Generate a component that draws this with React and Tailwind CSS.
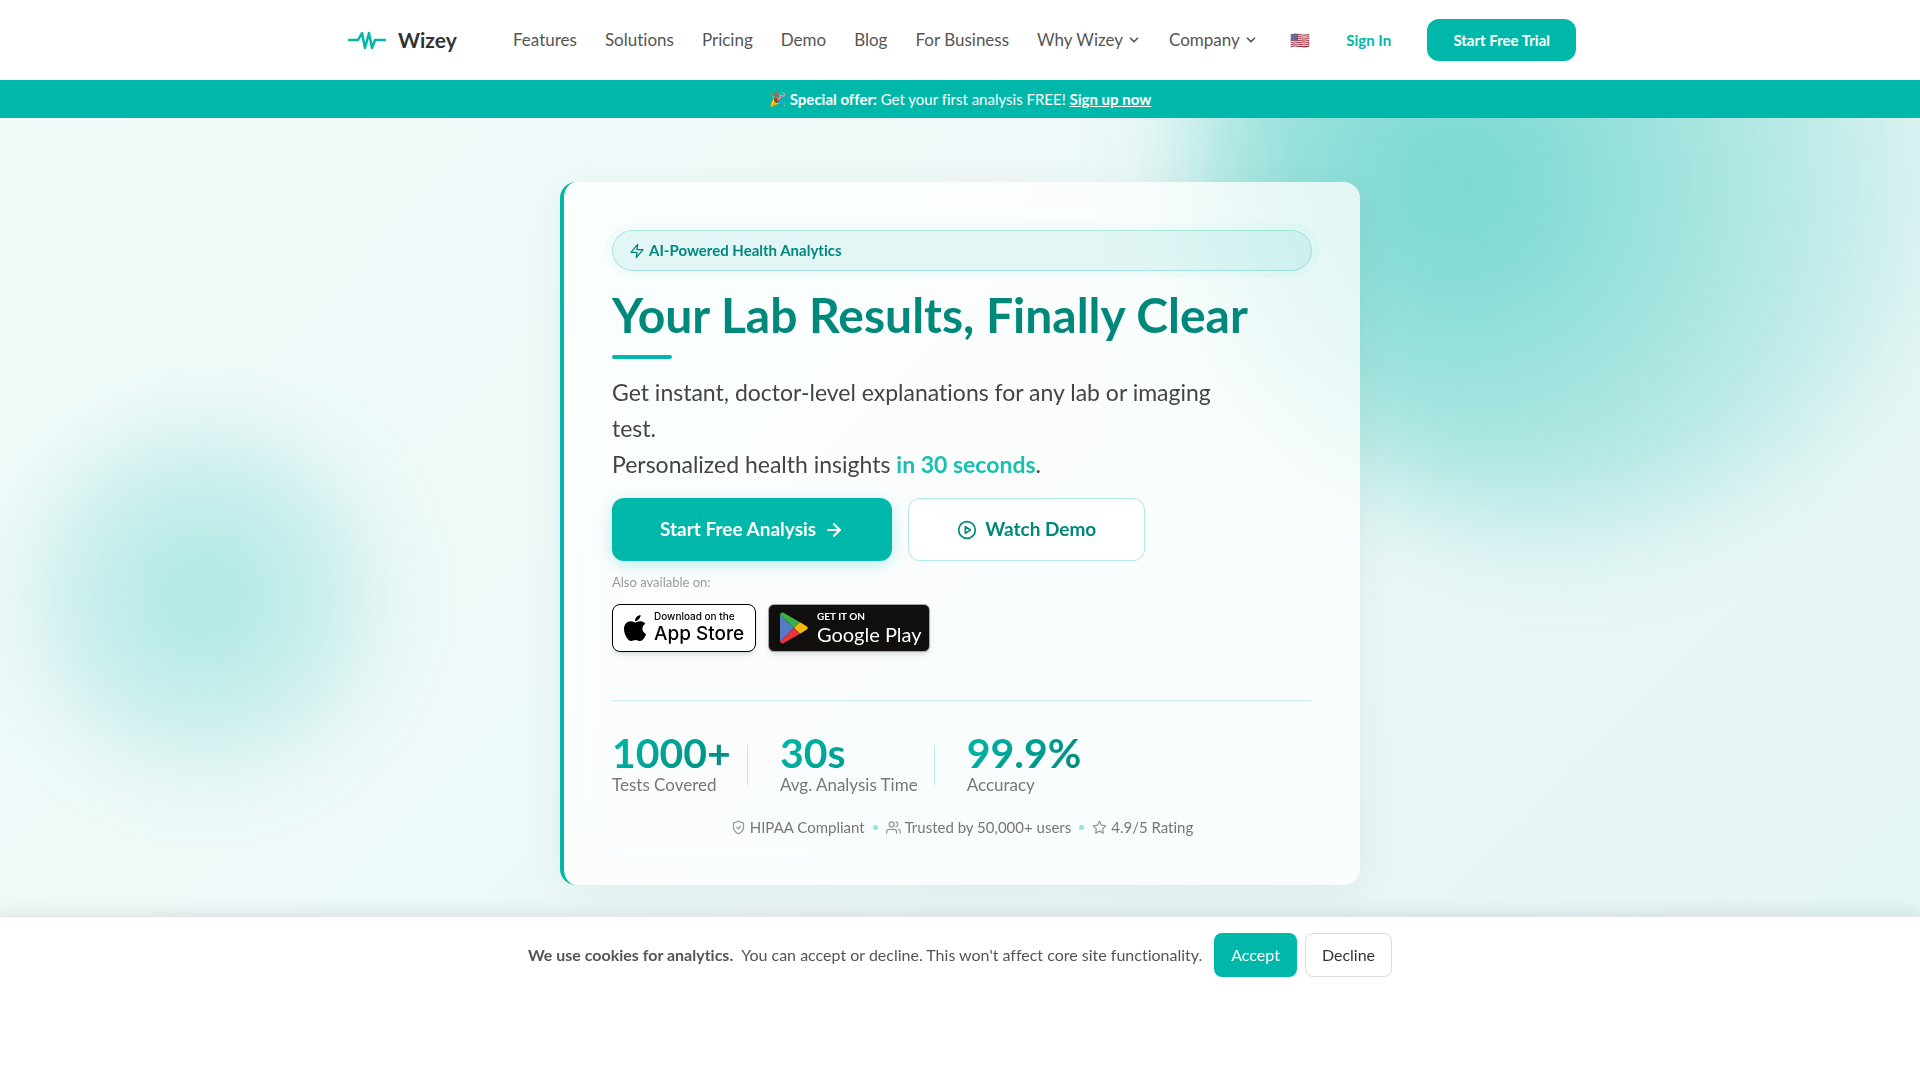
import { FaApple } from 'react-icons/fa';
import { FiArrowRight, FiChevronDown, FiPlayCircle, FiStar, FiUsers, FiZap } from 'react-icons/fi';

const navLinks = [
  { label: 'Features' },
  { label: 'Solutions' },
  { label: 'Pricing' },
  { label: 'Demo' },
  { label: 'Blog' },
  { label: 'For Business' },
  { label: 'Why Wizey', menu: true },
  { label: 'Company', menu: true },
];

const stats = [
  { value: '1000+', label: 'Tests Covered' },
  { value: '30s', label: 'Avg. Analysis Time' },
  { value: '99.9%', label: 'Accuracy' },
];

function ShieldCheck({ className }) {
  return (
    <svg viewBox="0 0 24 24" fill="none" stroke="currentColor" strokeWidth="2" strokeLinecap="round" strokeLinejoin="round" className={className} aria-hidden="true">
      <path d="M12 22s8-4 8-10V5l-8-3-8 3v7c0 6 8 10 8 10z" />
      <path d="M9.500 12l2 2 3.500-4" />
    </svg>
  );
}

function Logo() {
  return (
    <a href="#home" className="flex items-center gap-3 pl-1">
      <svg viewBox="0 0 38 18" fill="none" stroke="#00b8a9" strokeWidth="2.500" strokeLinecap="round" strokeLinejoin="round" className="h-[18px] w-[38px]" aria-hidden="true">
        <path d="M1 9h9l4-7 3 15 4-15 3 15 3-8h10" />
      </svg>
      <span className="text-[21px] font-bold text-[#333]">Wizey</span>
    </a>
  );
}

function Header() {
  return (
    <header className="bg-white">
      <div className="mx-auto flex h-20 max-w-7xl items-center justify-between px-6">
        <Logo />
        <nav className="flex items-center gap-7 pl-6 text-[17px] leading-5 text-[#555]">
          {navLinks.map((item) =>
            item.menu ? (
              <button key={item.label} type="button" className="flex items-center gap-1">
                {item.label}
                <FiChevronDown className="size-[14px]" strokeWidth={3} />
              </button>
            ) : (
              <a key={item.label} href="#nav">{item.label}</a>
            )
          )}
        </nav>
        <button type="button" aria-label="Language" className="text-base">🇺🇸</button>
        <a href="#signin" className="px-1 text-[15px] font-bold text-[#00b8a9]">Sign In</a>
        <a href="#trial" className="flex h-[42px] items-center rounded-xl bg-[#00b8a9] px-[26px] text-[15px] font-bold text-white">Start Free Trial</a>
      </div>
    </header>
  );
}

function Banner() {
  return (
    <div className="flex h-[38px] items-center justify-center gap-1 bg-[#00b8a9] text-[15px] text-white">
      <span className="text-sm">🎉</span>
      <p>
        <strong className="font-bold">Special offer:</strong> Get your first analysis FREE! <a href="#signup" className="font-bold underline">Sign up now</a>
      </p>
    </div>
  );
}

function StoreBadges() {
  return (
    <div className="mt-3 flex gap-3">
      <a href="#appstore" className="flex h-12 w-36 items-center gap-1 rounded-lg border border-black bg-white pl-[7px] font-['Inter',sans-serif] text-black shadow-md shadow-black/10">
        <FaApple className="size-[30px] shrink-0" />
        <span className="flex flex-col whitespace-nowrap">
          <span className="text-[10px] leading-3 font-medium">Download on the</span>
          <span className="text-[19px] leading-6 font-medium">App Store</span>
        </span>
      </a>
      <a href="#googleplay" className="flex h-12 w-[162px] items-center gap-[9px] rounded-md border border-[#a6a6a6] bg-[#100f0d] pl-[11px] text-white shadow-md shadow-black/10">
        <svg viewBox="0 0 28 32" className="h-8 w-7 shrink-0" aria-hidden="true">
          <path d="M0 2.500V29.500L14 16z" fill="#557ac6" />
          <path d="M0 2.500Q.5 0 3.500.8L20 10.300 14 16z" fill="#3bad49" />
          <path d="M20 10.300L26.500 14.200Q29 16 26.500 17.800L20 21.700 14 16z" fill="#f9b711" />
          <path d="M0 29.500Q.5 32 3.500 31.200L20 21.700 14 16z" fill="#ed3338" />
        </svg>
        <span className="flex flex-col whitespace-nowrap">
          <span className="text-[10px] leading-3 font-bold">GET IT ON</span>
          <span className="text-xl leading-6">Google Play</span>
        </span>
      </a>
    </div>
  );
}

function Stats() {
  return (
    <div className="mt-12 flex items-center border-t border-[#00b8a9]/20 pt-8">
      {stats.map((s, i) => (
        <div key={s.label} className="flex items-center">
          {i > 0 && <span className="mr-8 ml-4 h-10 w-px bg-[#00b8a9]/25" />}
          <div>
            <p className="bg-linear-135 from-[#00b8a9] to-[#00897b] bg-clip-text text-[41px] leading-10 font-bold text-transparent">{s.value}</p>
            <p className="text-[17px] leading-6 text-[#777]">{s.label}</p>
          </div>
        </div>
      ))}
    </div>
  );
}

function TrustRow() {
  return (
    <div className="mt-5 flex items-center justify-center gap-2 text-[15px] leading-5 text-[#777]">
      <span className="flex items-center gap-1"><ShieldCheck className="size-[15px] text-[#999]" />HIPAA Compliant</span>
      <span className="size-[5px] rounded-full bg-[#00b8a9]/40" />
      <span className="flex items-center gap-1"><FiUsers className="size-[15px] text-[#999]" />Trusted by 50,000+ users</span>
      <span className="size-[5px] rounded-full bg-[#00b8a9]/40" />
      <span className="flex items-center gap-1"><FiStar className="size-[15px] text-[#999]" />4.9/5 Rating</span>
    </div>
  );
}

function Hero() {
  return (
    <main className="relative flex-1 overflow-hidden bg-linear-135 from-[#f2fbfa] via-[#edf8f8] to-[#e3f5f4] px-6 pt-16 pb-7">
      {/* soft background blobs */}
      <div className="absolute -top-[328px] left-[62%] size-[740px] rounded-full bg-[radial-gradient(circle_560px_at_36%_53%,rgba(0,184,169,0.52),rgba(0,184,169,0))] blur-[50px]" />
      <div className="absolute top-[297px] left-[22px] size-[360px] rounded-full bg-[radial-gradient(circle_250px_at_50%_50%,rgba(0,184,169,0.3),rgba(0,184,169,0))] blur-2xl" />

      <section className="relative mx-auto max-w-[800px] rounded-2xl border-l-4 border-[#00b8a9] bg-white/75 p-12 shadow-[0_8px_40px_rgba(0,60,50,0.06)] backdrop-blur-xl">
        <div className="flex h-[41px] items-center gap-1 rounded-full border border-[#00b8a9]/25 bg-[#00b8a9]/10 px-4 text-[15px] font-bold text-[#00897b] shadow-[0_0_0_7px_rgba(0,184,169,0.03)]">
          <FiZap className="size-4" />
          AI-Powered Health Analytics
        </div>
        <h1 className="mt-4 text-5xl leading-14 font-bold text-[#00897b]">Your Lab Results, Finally Clear</h1>
        <div className="mt-3 h-1 w-[60px] rounded-full bg-[#00b8a9]" />
        <p className="mt-[15px] max-w-[620px] text-[23px] leading-9 text-[#444]">
          Get instant, doctor-level explanations for any lab or imaging test.
          <br />
          Personalized health insights <strong className="font-bold text-[#1abfb0]">in 30 seconds</strong>.
        </p>
        <div className="mt-4 flex gap-4">
          <button type="button" className="flex h-[63px] items-center gap-2 rounded-xl bg-[#00b8a9] px-12 text-[19px] font-bold text-white shadow-[0_4px_16px_rgba(0,184,169,0.25)]">
            Start Free Analysis
            <FiArrowRight className="size-5" strokeWidth={2.5} />
          </button>
          <button type="button" className="flex h-[63px] items-center gap-2 rounded-xl border border-[#00b8a9]/30 bg-white px-12 text-[19px] font-bold text-[#00897b]">
            <FiPlayCircle className="size-5" />
            Watch Demo
          </button>
        </div>
        <p className="mt-[11px] text-[13px] leading-5 text-[#999]">Also available on:</p>
        <StoreBadges />
        <Stats />
        <TrustRow />
      </section>
    </main>
  );
}

function CookieBar() {
  return (
    <div className="relative flex items-start justify-center gap-3 border-t border-[#e5e5e5] bg-white px-4 pt-4 pb-[103px] text-base text-[#555] shadow-[0_-4px_16px_rgba(0,0,0,0.08)]">
      <p className="flex h-11 items-center gap-2">
        <strong className="font-bold">We use cookies for analytics.</strong>
        <span>You can accept or decline. This won't affect core site functionality.</span>
      </p>
      <div className="flex gap-2">
        <button type="button" className="h-11 rounded-lg bg-[#00b8a9] px-[17px] text-white">Accept</button>
        <button type="button" className="h-11 rounded-lg border border-[#ddd] bg-white px-4 text-[#333]">Decline</button>
      </div>
    </div>
  );
}

export default function App() {
  return (
    <div className="flex min-h-screen flex-col bg-white font-['Lato',sans-serif] [font-variant-ligatures:no-common-ligatures]">
      <Header />
      <Banner />
      <Hero />
      <CookieBar />
    </div>
  );
}
